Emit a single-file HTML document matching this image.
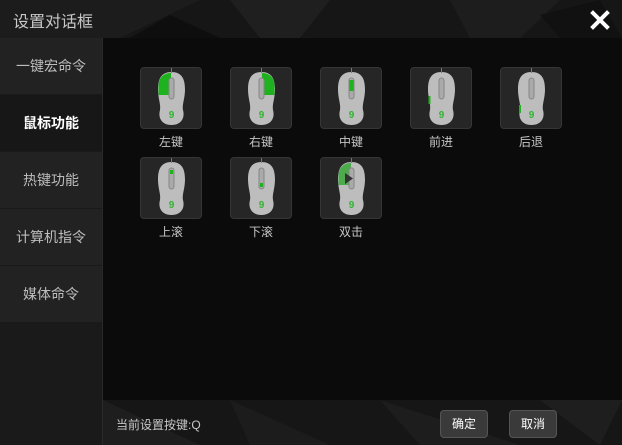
<!DOCTYPE html>
<html><head><meta charset="utf-8"><style>
*{margin:0;padding:0;box-sizing:border-box}
body{width:622px;height:445px;overflow:hidden;background:#161616;font-family:"Liberation Sans","Noto Sans CJK SC",sans-serif;position:relative}
.bg{position:absolute;left:0;top:0}
.title{position:absolute;left:13px;top:8px;color:#c8c8c8;font-size:16px}
.close{position:absolute;left:590px;top:10px}
.side{position:absolute;left:0;top:38px;width:103px;height:407px;background:#1a1a1a;border-right:1px solid #2a2a2a}
.it{height:57px;background:#222;border-bottom:1px solid #1a1a1a;color:#bdbdbd;font-size:14px;text-align:center;line-height:56px}
.it.a{background:#171717;color:#fff;font-weight:bold}
.main{position:absolute;left:103px;top:38px;width:519px;height:362px;background:#0b0b0b}
.tile{position:absolute;width:62px;height:62px;background:#262626;border:1px solid #363636;border-radius:4px}
.tile svg{position:absolute;left:-1px;top:-1px}
.lb{position:absolute;width:62px;text-align:center;color:#c6c6c6;font-size:12px}
.foot{position:absolute;left:116px;top:416px;color:#c8c8c8;font-size:12px}
.btn{position:absolute;top:410px;width:48px;height:28px;border:1px solid #555;border-radius:4px;background:#3a3a3a;color:#fff;font-size:12px;text-align:center;line-height:26px}
</style></head><body>
<svg class="bg" width="622" height="445">
<rect width="622" height="445" fill="#161616"/>
<polygon points="0,0 200,0 120,38 0,38" fill="#1c1c1c"/>
<polygon points="130,38 170,15 220,38" fill="#0e0e0e"/>
<polygon points="230,0 330,0 300,38 260,38" fill="#1f1f1f"/>
<polygon points="450,0 560,0 520,38 470,38" fill="#1d1d1d"/>
<polygon points="540,15 600,0 622,38 560,38" fill="#111"/>
<polygon points="103,400 200,445 103,445" fill="#1e1e1e"/>
<polygon points="230,400 330,445 250,445" fill="#1c1c1c"/>
<polygon points="380,400 520,445 420,445" fill="#1d1d1d"/>
<polygon points="540,400 622,400 600,445" fill="#1e1e1e"/>
</svg>
<div class="title">设置对话框</div>
<svg class="close" width="20" height="20" viewBox="0 0 20 20"><path d="M3 3L17 17M17 3L3 17" stroke="#fff" stroke-width="4" stroke-linecap="square"/></svg>
<div class="side">
<div class="it">一键宏命令</div><div class="it a">鼠标功能</div><div class="it">热键功能</div><div class="it">计算机指令</div><div class="it">媒体命令</div>
</div>
<div class="main"></div>
<svg width="0" height="0" style="position:absolute"><defs>
<g id="body">
<path d="M31.5 5C22 5 18 11 18 22C18 32 21 37 20 43C18 50 21 58 31.5 58C42 58 45 50 43 43C42 37 45 32 45 22C45 11 41 5 31.5 5Z" fill="#bdbdbd"/>
<line x1="31.5" y1="1" x2="31.5" y2="6" stroke="#777"/>
</g>
<g id="wheel">
<rect x="29" y="11" width="5" height="21" rx="2.5" fill="#aaa" stroke="#858585"/>
<text x="31.5" y="51" font-size="10" font-weight="bold" fill="#2fb52f" text-anchor="middle" font-family="Liberation Sans">9</text>
</g></defs></svg>
<div class="tile" style="left:140px;top:67px"><svg width="62" height="62"><use href="#body"/><path d="M31 6C23 6 19 11 18.5 18L18.5 28L31 28Z" fill="#1fb21f"/><use href="#wheel"/></svg></div>
<div class="tile" style="left:230px;top:67px"><svg width="62" height="62"><use href="#body"/><path d="M32 6C40 6 44 11 44.5 18L44.5 28L32 28Z" fill="#1fb21f"/><use href="#wheel"/></svg></div>
<div class="tile" style="left:320px;top:67px"><svg width="62" height="62"><use href="#body"/><use href="#wheel"/><rect x="29.5" y="13" width="4" height="11" fill="#1fb21f"/></svg></div>
<div class="tile" style="left:410px;top:67px"><svg width="62" height="62"><use href="#body"/><use href="#wheel"/><rect x="18.5" y="29" width="2" height="8" fill="#1fb21f"/></svg></div>
<div class="tile" style="left:500px;top:67px"><svg width="62" height="62"><use href="#body"/><use href="#wheel"/><rect x="19" y="38" width="2" height="8" fill="#1fb21f"/></svg></div>
<div class="lb" style="left:140px;top:133px">左键</div>
<div class="lb" style="left:230px;top:133px">右键</div>
<div class="lb" style="left:320px;top:133px">中键</div>
<div class="lb" style="left:410px;top:133px">前进</div>
<div class="lb" style="left:500px;top:133px">后退</div>
<div class="tile" style="left:140px;top:157px"><svg width="62" height="62"><use href="#body"/><use href="#wheel"/><rect x="30" y="13" width="3" height="4" fill="#1fb21f"/></svg></div>
<div class="tile" style="left:230px;top:157px"><svg width="62" height="62"><use href="#body"/><use href="#wheel"/><rect x="30" y="26" width="3" height="4" fill="#1fb21f"/></svg></div>
<div class="tile" style="left:320px;top:157px"><svg width="62" height="62"><use href="#body"/><path d="M31 6C23 6 19 11 18.5 18L18.5 28L31 28Z" fill="#3aa83a" opacity="0.85"/><use href="#wheel"/><path d="M25 16L33 21.5L25 27Z" fill="#333"/></svg></div>
<div class="lb" style="left:140px;top:223px">上滚</div>
<div class="lb" style="left:230px;top:223px">下滚</div>
<div class="lb" style="left:320px;top:223px">双击</div>
<div class="foot">当前设置按键:Q</div>
<div class="btn" style="left:440px">确定</div>
<div class="btn" style="left:509px">取消</div>
</body></html>
